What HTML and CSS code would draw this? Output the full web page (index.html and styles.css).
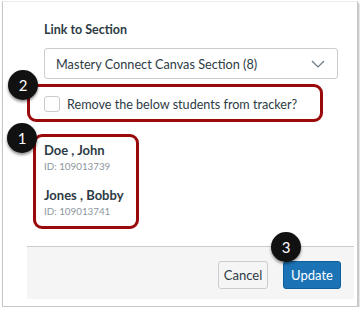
FILE: index.html
```html
<!DOCTYPE html>
<html lang="en">
<head>
    <meta charset="UTF-8">
    <meta name="viewport" content="width=device-width, initial-scale=1.0">
    <title>Link to Section</title>
    <link rel="stylesheet" href="styles.css">
</head>
<body>
    <div class="dialog">
        <div class="dialog-body">
            <label class="field-label" for="section">Link to Section</label>
            <div class="select-box" id="section">
                <span>Mastery Connect Canvas Section (8)</span>
                <svg class="chevron" width="14" height="8" viewBox="0 0 14 8">
                    <polyline points="1,1 7,7 13,1" fill="none" stroke="#6b7780" stroke-width="1.2"/>
                </svg>
            </div>

            <!-- remove checkbox -->
            <div class="check-row highlight">
                <span class="checkbox"></span>
                <span class="check-text">Remove the below students from tracker?</span>
            </div>

            <!-- student list -->
            <div class="students highlight">
                <div class="student">
                    <div class="student-name">Doe , John</div>
                    <div class="student-id">ID: 109013739</div>
                </div>
                <div class="student">
                    <div class="student-name">Jones , Bobby</div>
                    <div class="student-id">ID: 109013741</div>
                </div>
            </div>
        </div>

        <div class="dialog-footer">
            <button class="btn btn-cancel">Cancel</button>
            <button class="btn btn-update">Update</button>
        </div>

        <span class="callout callout-2">2</span>
        <span class="callout callout-1">1</span>
        <span class="callout callout-3">3</span>
    </div>
</body>
</html>
```

FILE: styles.css
```css
body {
    margin: 0;
    background: #fff;
    font-family: Lato, "Open Sans", sans-serif;
    color: #2d3b45;
}

.dialog {
    position: relative;
    box-sizing: border-box;
    width: 356px;
    height: 306px;
    margin: 1px 0 0 2px;
    border: 1px solid #c8c8c8;
    border-top-color: #ececec;
    box-shadow: 1px 2px 2px rgba(0, 0, 0, 0.3);
    background: #fff;
}

.dialog-body {
    padding: 20px 0 0 41px;
}

.field-label {
    display: block;
    font-size: 12.5px;
    font-weight: bold;
    line-height: 16px;
}

.select-box {
    box-sizing: border-box;
    display: flex;
    align-items: center;
    justify-content: space-between;
    width: 294px;
    height: 31px;
    margin-top: 10px;
    padding: 0 12px 0 11px;
    border: 1px solid #c7cdd1;
    border-radius: 3px;
    font-size: 12.7px;
}

.chevron {
    margin-top: 1px;
}

.highlight {
    box-sizing: border-box;
    border: 3px solid #9b0a0a;
    border-radius: 9px;
}

.check-row {
    display: flex;
    align-items: center;
    width: 296px;
    height: 38px;
    margin: 5px 0 0 -17px;
    padding: 2px 0 0 14px;
}

.checkbox {
    box-sizing: border-box;
    width: 16px;
    height: 16px;
    border: 1px solid #c7cdd1;
    border-radius: 3px;
    background: #fff;
}

.check-text {
    margin-left: 7px;
    font-size: 12.6px;
    white-space: nowrap;
}

.students {
    width: 106px;
    height: 95px;
    margin: 12px 0 0 -11px;
    padding: 4px 0 0 8px;
}

.student {
    margin-bottom: 13px;
}

.student-name {
    font-size: 13px;
    font-weight: bold;
    line-height: 18px;
}

.student-id {
    font-size: 9.8px;
    color: #8b969e;
    line-height: 14px;
}

.dialog-footer {
    display: flex;
    justify-content: flex-end;
    gap: 15px;
    height: 53px;
    margin: 17px 3px 0 24px;
    padding: 14px 13px 0 0;
    box-sizing: border-box;
    background: #f5f5f5;
    border-top: 1px solid #c7cdd1;
}

.btn {
    height: 28px;
    padding: 0;
    border-radius: 3px;
    font-family: Lato, "Open Sans", sans-serif;
    font-size: 13px;
}

.btn-cancel {
    width: 50px;
    background: #f5f5f5;
    border: 1px solid #c7cdd1;
    color: #2d3b45;
}

.btn-update {
    width: 58px;
    background: #1b73b6;
    border: 1px solid #0e5f99;
    color: #fff;
}

.callout {
    position: absolute;
    width: 30px;
    height: 30px;
    border-radius: 50%;
    background: #111;
    color: #fff;
    font-size: 15px;
    line-height: 30px;
    text-align: center;
    box-shadow: 0 2px 3px rgba(0, 0, 0, 0.45);
}

.callout-2 {
    left: 5px;
    top: 68px;
}

.callout-1 {
    left: 4px;
    top: 121px;
}

.callout-3 {
    left: 268px;
    top: 230px;
}
```
